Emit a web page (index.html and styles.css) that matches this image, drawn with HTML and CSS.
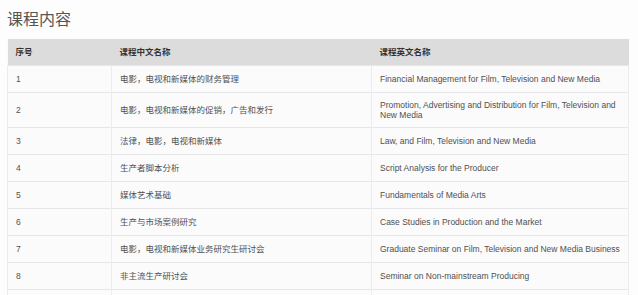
FILE: index.html
```html
<!DOCTYPE html>
<html lang="zh-CN">
<head>
    <meta charset="UTF-8">
    <meta name="viewport" content="width=device-width, initial-scale=1.0">
    <title>课程内容</title>
    <link rel="stylesheet" href="styles.css">
</head>
<body>
    <h2 class="titulo">课程内容</h2>
    <table class="cursos">
        <thead>
            <tr>
                <th class="col-num">序号</th>
                <th class="col-cn">课程中文名称</th>
                <th class="col-en">课程英文名称</th>
            </tr>
        </thead>
        <tbody>
            <tr><td>1</td><td>电影，电视和新媒体的财务管理</td><td>Financial Management for Film, Television and New Media</td></tr>
            <tr><td>2</td><td>电影，电视和新媒体的促销，广告和发行</td><td>Promotion, Advertising and Distribution for Film, Television and New Media</td></tr>
            <tr><td>3</td><td>法律，电影，电视和新媒体</td><td>Law, and Film, Television and New Media</td></tr>
            <tr><td>4</td><td>生产者脚本分析</td><td>Script Analysis for the Producer</td></tr>
            <tr><td>5</td><td>媒体艺术基础</td><td>Fundamentals of Media Arts</td></tr>
            <tr><td>6</td><td>生产与市场案例研究</td><td>Case Studies in Production and the Market</td></tr>
            <tr><td>7</td><td>电影，电视和新媒体业务研究生研讨会</td><td>Graduate Seminar on Film, Television and New Media Business</td></tr>
            <tr><td>8</td><td>非主流生产研讨会</td><td>Seminar on Non-mainstream Producing</td></tr>
            <tr class="fila-vacia"><td></td><td></td><td></td></tr>
        </tbody>
    </table>
</body>
</html>
```

FILE: styles.css
```css
*{
    margin: 0;
    padding: 0;
    box-sizing: border-box;
}
body{
    background: #fdfdfd;
    padding: 7px 9px 0 7px;
    font-family: "Liberation Sans", "Noto Sans CJK SC", sans-serif;
    color: #505050;
}
.titulo{
    font-family: "Noto Sans CJK SC", sans-serif;
    font-size: 16px;
    font-weight: 400;
    line-height: 22px;
    color: #555;
    margin-bottom: 10px;
}

.cursos{
    width: 100%;
    border-collapse: collapse;
    table-layout: fixed;
    font-size: 8.5px;
    line-height: 10px;
    background: #fbfbfc;
}
.cursos th{
    background: #dcdcdc;
    color: #333;
    font-weight: 700;
    text-align: left;
    height: 26px;
    padding: 0 8px;
}
.cursos td{
    height: 27px;
    padding: 7px 8px;
    border-top: 1px solid #e6e6e8;
    border-left: 1px solid #ececef;
    border-right: 1px solid #ececef;
    vertical-align: middle;
}
.col-num{ width: 104px; }
.col-cn{ width: 260px; }
```
